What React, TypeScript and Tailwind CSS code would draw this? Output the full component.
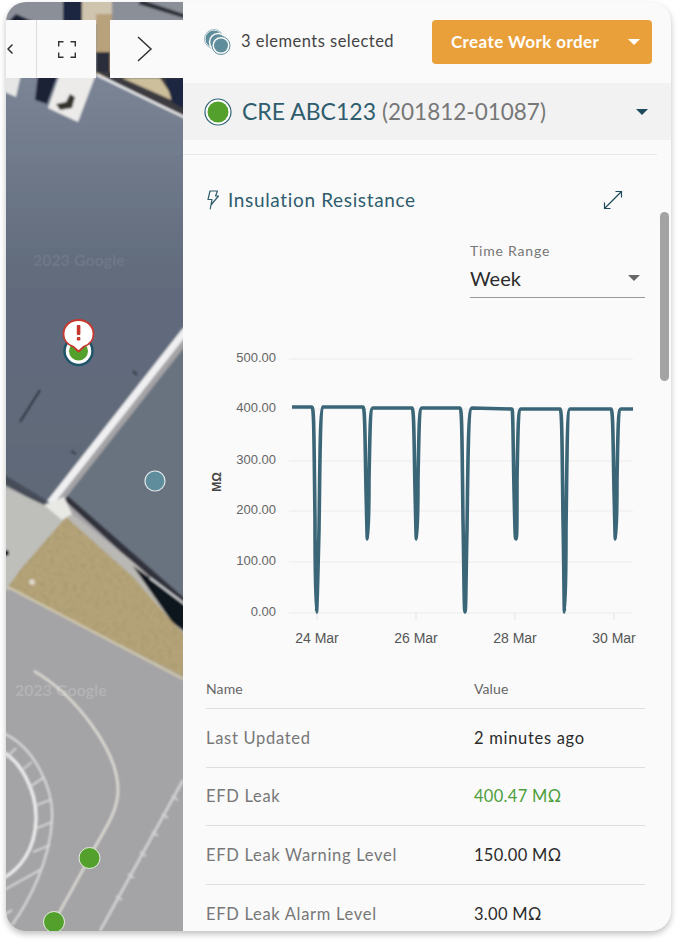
import React from 'react';
import { ChevronLeft } from 'lucide-react';

const rows = [
    { name: 'Last Updated', value: '2 minutes ago', valueClass: 'text-[#2b2b2b]', height: 'h-[59px]' },
    { name: 'EFD Leak', value: '400.47 MΩ', valueClass: 'text-[#4c9f3a] tracking-[0.3px]', height: 'h-[58px]' },
    { name: 'EFD Leak Warning Level', value: '150.00 MΩ', valueClass: 'text-[#2b2b2b] tracking-[0.3px]', height: 'h-[59px]' },
    { name: 'EFD Leak Alarm Level', value: '3.00 MΩ', valueClass: 'text-[#2b2b2b] tracking-[0.3px]', height: 'h-[59px]' },
];

const yTicks = [
    { label: '500.00', y: 359 },
    { label: '400.00', y: 409 },
    { label: '300.00', y: 461 },
    { label: '200.00', y: 511 },
    { label: '100.00', y: 562 },
    { label: '0.00', y: 613 },
];

const xTicks = [
    { label: '24 Mar', x: 317 },
    { label: '26 Mar', x: 416 },
    { label: '28 Mar', x: 515 },
    { label: '30 Mar', x: 614 },
];

// resistance line, in page coordinates
const linePath = `M292 407 L312 407 C314 407 314 440 315 520 C315 570 316 612 316.5 612 C317 612 318 570 319 530 C320 460 320 408 323 407
L363 407 C365 407 365 440 366 490 C367 530 367 539 367.5 539 C368 539 369 520 369 480 C370 430 370 408 373 408
L412 408 C414 408 414 440 415 490 C416 530 416 539 416.5 539 C417 539 418 520 418 480 C419 430 419 408 422 408
L460 408 C462 408 462 440 463 520 C464 570 464 612 465 612 C466 612 466 570 467 530 C468 460 468 408 472 408
L512 409 C513 409 513 440 514 490 C515 530 515 539 516 539 C517 539 517 520 517 480 C518 430 518 409 521 409
L560 409 C562 409 562 440 563 520 C564 570 564 612 564.5 612 C565 612 566 570 566 530 C567 460 567 409 570 409
L611 409 C613 409 613 440 614 490 C615 530 615 539 615.5 539 C616 539 617 520 617 480 C618 430 618 409 621 409 L633 409`;

const Caret = ({ className }: { className: string }) => (
    <div className={`w-0 h-0 border-l-[6px] border-r-[6px] border-t-[6px] border-l-transparent border-r-transparent ${className}`}></div>
);

const MapPicture = () => (
    <svg className="absolute inset-0" width="177" height="929" viewBox="6 2 177 929">
        <defs>
            <filter id="soft"><feGaussianBlur stdDeviation="0.8" /></filter>
            <filter id="grain" x="0" y="0" width="100%" height="100%">
                <feTurbulence type="fractalNoise" baseFrequency="0.22" numOctaves="2" seed="4" result="n" />
                <feColorMatrix in="n" type="matrix" values="0 0 0 0 0.38  0 0 0 0 0.32  0 0 0 0 0.16  0 0 0 2.4 -1.05" result="d" />
                <feComposite in="d" in2="SourceGraphic" operator="in" result="c" />
                <feMerge><feMergeNode in="SourceGraphic" /><feMergeNode in="c" /></feMerge>
            </filter>
            <linearGradient id="roof" x1="0" y1="0" x2="0" y2="1">
                <stop offset="0" stopColor="#7b8596" />
                <stop offset="0.45" stopColor="#626c7d" />
                <stop offset="1" stopColor="#5f6978" />
            </linearGradient>
        </defs>
        <g filter="url(#soft)">
            <rect x="0" y="0" width="190" height="940" fill="#a4a3a6" />
            {/* buildings along the top, mostly behind the controls */}
            <rect x="0" y="0" width="190" height="90" fill="#8b8f98" />
            <path d="M8 22 L16 14 L34 22 Z" fill="#1c2136" />
            <rect x="63" y="0" width="19" height="24" fill="#1e2540" />
            <rect x="82" y="0" width="30" height="24" fill="#cfc4ae" />
            <rect x="96" y="14" width="16" height="64" fill="#b8a27c" />
            <rect x="96" y="52" width="14" height="20" fill="#2c2f3a" />
            <path d="M138 4 L190 20 L190 16 L142 0 Z" fill="#2b2d35" />
            <path d="M96 72 L190 72 L190 122 Z" fill="#3a3b40" />
            <path d="M122 78 L160 78 L176 102 Z" fill="#cdbf9c" />
            <path d="M165 78 L190 78 L190 112 L172 102 Z" fill="#1e2540" />
            {/* upper roof */}
            <path d="M0 74 L96 74 L190 122 L190 325 L48 508 L0 482 Z" fill="url(#roof)" />
            <path d="M97 75 L190 120" stroke="#f2f2f4" strokeWidth="2.2" />
            <path d="M60 74 L96 74 L78 122 L48 108 Z" fill="#ecebea" />
            <path d="M38 74 L58 74 L47 104 L35 100 Z" fill="#1c2136" />
            <path d="M0 74 L21 74 L16 97 L0 90 Z" fill="#e6e6e6" />
            <path d="M56 104 L66 102 L70 94 L75 97 L72 108 L60 110 Z" fill="#35352f" />
            <path d="M0 472 L46 500 L44 506 L0 482 Z" fill="#474d59" />
            <path d="M40 390 L20 422" stroke="#1f2532" strokeWidth="1.8" />
            <path d="M133 371 L137 375 M71 451 L76 454" stroke="#3a404c" strokeWidth="2.5" />
            {/* lower roof */}
            <path d="M190 340 L64 500 L190 606 Z" fill="#69737f" />
            <path d="M64 500 L133 563 L190 612 L190 603 L68 496 Z" fill="#30333c" />
            {/* concrete, grass and its dark edge */}
            <path d="M0 485 L44 505 L68 518 L22 570 L18 590 L0 590 Z" fill="#bebfbb" />
            <path d="M70 512 L133 562 L190 612 L190 650 L133 580 L66 520 Z" fill="#b9b8b4" />
            <path d="M133 566 L190 606 L190 636 L172 622 Z" fill="#10131c" />
            <path d="M150 578 L190 608" stroke="#d7dadd" strokeWidth="2" />
            <path d="M66 517 L133 577 L173 623 L190 640 L190 680 L8 587 L20 570 Z" fill="#b5a378" filter="url(#grain)" />
            <path d="M8 587 L183 679" stroke="#cfc8ae" strokeWidth="2.5" />
            <circle cx="6" cy="553" r="3" fill="#111111" />
            <circle cx="32" cy="582" r="3" fill="#ddd6c8" />
            {/* road markings */}
            <path d="M34 671 C75 695 118 750 118 790 C118 815 100 835 90 857 L54 922" fill="none" stroke="#dedcd4" strokeWidth="2.5" />
            <path d="M0 732 C35 745 54 790 52 820 C50 860 30 900 12 925" fill="none" stroke="#dcdcdc" strokeWidth="2" />
            <path d="M0 750 C20 760 37 790 36 820 C35 850 20 870 0 880" fill="none" stroke="#f0f0f0" strokeWidth="3" />
            <path d="M16 748 L6 758 M32 762 L22 770 M43 778 L28 788 M50 800 L37 805 M52 822 L37 828 M50 845 L33 852 M40 870 L4 890 M12 910 L4 915" stroke="#dcdcdc" strokeWidth="1.6" />
            <path d="M183 780 L100 931" fill="none" stroke="#d6d6d6" strokeWidth="2.5" />
            <path d="M178 800 L172 796 M168 818 L162 814 M158 836 L152 832 M146 856 L140 852 M134 878 L128 874 M122 900 L116 896" stroke="#d6d6d6" strokeWidth="1.6" />
            {/* white stripe between the roofs, on top */}
            <path d="M186 330 L50 503" stroke="#f0f0f2" strokeWidth="7" />
            <path d="M44 505 L64 497 L72 514 L62 520 Z" fill="#e8e8e4" />
        </g>
        <text x="33" y="266" fontFamily="Lato, sans-serif" fontSize="16" fontWeight="700" fill="#ffffff" opacity="0.07">2023 Google</text>
        <text x="15" y="696" fontFamily="Lato, sans-serif" fontSize="16" fontWeight="700" fill="#ffffff" opacity="0.16">2023 Google</text>

        {/* sensors */}
        <circle cx="155" cy="481" r="10" fill="#5f8d9b" stroke="#dfe8ea" strokeWidth="1.2" />
        <circle cx="89.5" cy="858" r="10.5" fill="#53a02d" stroke="#e6efe0" strokeWidth="1" />
        <circle cx="54" cy="922" r="10.5" fill="#53a02d" stroke="#e6efe0" strokeWidth="1" />
        <circle cx="78.5" cy="351" r="14" fill="#ffffff" stroke="#1f5568" strokeWidth="2.5" />
        <circle cx="78.5" cy="351" r="9.5" fill="#53a02d" />
        {/* alert bubble */}
        <path d="M78.5 351.5 L73 346.5 C67 344.5 63.5 339.5 63.5 334 C63.5 326 70 320 78.5 320 C87 320 93.5 326 93.5 334 C93.5 339.5 90 344.5 84 346.5 Z" fill="#ffffff" stroke="#c8372d" strokeWidth="1.8" strokeLinejoin="round" />
        <rect x="76.8" y="325" width="3.6" height="10" rx="1" fill="#c8372d" />
        <rect x="76.8" y="337" width="3.6" height="3.6" rx="1" fill="#c8372d" />
    </svg>
);

const Chart = () => (
    <svg className="block" width="462" height="310" viewBox="183 340 462 310">
        {yTicks.map((t) => (
            <g key={t.label}>
                <line x1="289" x2="633" y1={t.y} y2={t.y} stroke="#ebebeb" strokeWidth="1.2" />
                <text x="276" y={t.y + 3} textAnchor="end" fontFamily="Liberation Sans, sans-serif" fontSize="13" fill="#666666">{t.label}</text>
            </g>
        ))}
        {xTicks.map((t) => (
            <g key={t.label}>
                <line x1={t.x} x2={t.x} y1="613" y2="620" stroke="#e4e4e4" />
                <text x={t.x} y="643" textAnchor="middle" fontFamily="Liberation Sans, sans-serif" fontSize="14" fill="#555555">{t.label}</text>
            </g>
        ))}
        <text transform="translate(221 482) rotate(-90)" textAnchor="middle" fontFamily="Liberation Sans, sans-serif" fontSize="12" fontWeight="700" fill="#444444">MΩ</text>
        <path d={linePath} fill="none" stroke="#3b6677" strokeWidth="3.6" strokeLinejoin="round" />
    </svg>
);

const App = () => {
    return (
        <div className="w-[678px] h-[942px] bg-white pt-[2px] pl-[6px] overflow-hidden font-['Lato',sans-serif]">
            <div className="w-[665px] h-[929px] flex rounded-[20px] overflow-hidden bg-[#fafafa] shadow-[0_3px_6px_rgba(0,0,0,0.25)]">
                {/* map side */}
                <div className="relative w-[177px] shrink-0 overflow-hidden">
                    <MapPicture />
                    <div className="absolute top-[18px] left-0 h-[58px] w-[90px] bg-[#fafafa] flex">
                        <div className="w-[31px] border-r border-[#dddddd] flex items-center">
                            <ChevronLeft size={16} strokeWidth={2.4} className="text-[#333333] -ml-[4px]" />
                        </div>
                        <div className="flex-1 flex items-center justify-center">
                            <svg width="18" height="17" viewBox="0 0 18 17">
                                <path d="M0.7 5.5 V0.7 H5.5 M12.5 0.7 H17.3 V5.5 M17.3 11.5 V16.3 H12.5 M5.5 16.3 H0.7 V11.5" fill="none" stroke="#333333" strokeWidth="1.4" />
                            </svg>
                        </div>
                    </div>
                    <div className="absolute top-[18px] left-[104px] right-0 h-[58px] bg-[#fafafa] flex items-center">
                        <svg width="18" height="26" viewBox="0 0 18 26" className="ml-[26px]">
                            <path d="M2 1 L15 13 L2 25" fill="none" stroke="#333333" strokeWidth="1.5" />
                        </svg>
                    </div>
                </div>

                {/* details side */}
                <div className="relative flex-1 overflow-hidden">
                    <div className="h-[81px] flex items-center pl-[21px] pr-[19px]">
                        <svg width="28" height="28" viewBox="0 0 28 28" className="shrink-0">
                            <circle cx="10" cy="10" r="9" fill="#5f8d9b" stroke="#ffffff" />
                            <circle cx="10" cy="10" r="9.5" fill="none" stroke="#7da3ae" strokeWidth="0.8" />
                            <circle cx="14" cy="13" r="8.5" fill="#5f8d9b" stroke="#fafafa" strokeWidth="1.5" />
                            <circle cx="17" cy="16.5" r="9" fill="#fafafa" stroke="#5f8d9b" strokeWidth="1" />
                            <circle cx="17" cy="16.5" r="7" fill="#5f8d9b" />
                        </svg>
                        <span className="ml-[9px] -mt-[2px] text-[16.5px] tracking-[0.48px] text-[#444444]">3 elements selected</span>
                        <div className="ml-auto w-[220px] h-[44px] -mt-[1px] rounded-[4px] bg-[#e9a03b] flex items-center pl-[19px] pr-[12px]">
                            <span className="text-[17px] font-bold tracking-[0.4px] text-white">Create Work order</span>
                            <Caret className="ml-auto border-t-white" />
                        </div>
                    </div>

                    <div className="h-[57px] bg-[#f2f2f2] flex items-center pl-[21px] pr-[23px]">
                        <svg width="28" height="28" viewBox="0 0 28 28" className="shrink-0">
                            <circle cx="14" cy="14" r="13" fill="#ffffff" stroke="#2f6475" strokeWidth="1.2" />
                            <circle cx="14" cy="14" r="10.5" fill="#53a02d" />
                        </svg>
                        <span className="ml-[10px] text-[23px] text-[#2f5d6e]">CRE ABC123</span>
                        <span className="ml-[6px] text-[22.5px] text-[#777777]">(201812-01087)</span>
                        <Caret className="ml-auto border-t-[#1f4a5b]" />
                    </div>

                    <div className="mt-[14px] mr-[14px] border-t border-[#e8e8e8]"></div>

                    <div className="mt-[32px] h-[26px] flex items-center pl-[24px] pr-[48px] text-[#2f5d6e]">
                        <svg width="12" height="20" viewBox="0 0 12 20" className="shrink-0">
                            <path d="M3 1 H10.5 L8.5 6 H11.5 L4 15 L5 9.5 H1 Z M4 15 L3.2 19" fill="none" stroke="currentColor" strokeWidth="1.2" strokeLinejoin="round" strokeLinecap="round" />
                        </svg>
                        <span className="ml-[9px] text-[19px] tracking-[0.65px]">Insulation Resistance</span>
                        <svg width="20" height="20" viewBox="0 0 20 20" className="ml-auto text-[#1f4a5b]">
                            <path d="M1.5 18.5 L18.5 1.5 M12.5 1.5 H18.5 V7.5 M1.5 12.5 V18.5 H7.5" fill="none" stroke="currentColor" strokeWidth="1.2" />
                        </svg>
                    </div>

                    <div className="mt-[29px] ml-[287px] w-[175px]">
                        <div className="text-[14px] leading-[18px] tracking-[0.8px] text-[#777777]">Time Range</div>
                        <div className="mt-[5px] h-[33px] flex items-center border-b border-[#999999] pb-[7px]">
                            <span className="text-[20px] text-[#2b2b2b]">Week</span>
                            <Caret className="ml-auto mr-[5px] border-t-[#666666]" />
                        </div>
                    </div>

                    <div className="mt-[42px]">
                        <Chart />
                    </div>

                    <div className="mt-[21px] ml-[23px] w-[439px] text-[16.5px] tracking-[0.7px]">
                        <div className="h-[38px] pt-[7px] flex items-start border-b border-[#dddddd] text-[14px] tracking-[0.1px] text-[#666666]">
                            <span className="w-[268px]">Name</span>
                            <span>Value</span>
                        </div>
                        {rows.map((row) => (
                            <div key={row.name} className={`${row.height} flex items-center border-b border-[#dddddd]`}>
                                <span className="w-[268px] text-[#777777]">{row.name}</span>
                                <span className={row.valueClass}>{row.value}</span>
                            </div>
                        ))}
                    </div>

                    {/* overlay scrollbar */}
                    <div className="absolute top-[210px] right-[2px] w-[9px] h-[169px] rounded-full bg-[#a3a3a3]"></div>
                </div>
            </div>
        </div>
    );
};

export default App;
